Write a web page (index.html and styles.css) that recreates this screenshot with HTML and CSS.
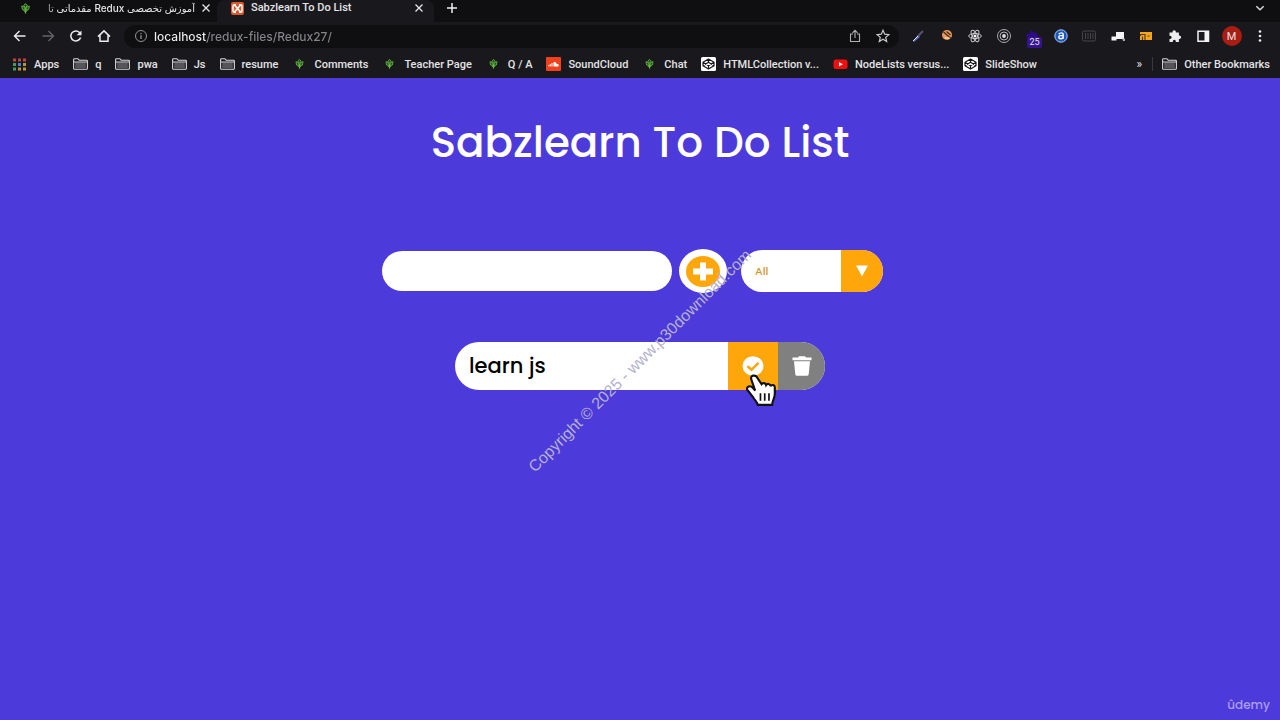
FILE: index.html
```
<!DOCTYPE html>
<html lang="en">
<head>
<meta charset="UTF-8" />
<meta name="viewport" content="width=device-width, initial-scale=1" />
<title>Sabzlearn To Do List</title>
<link rel="stylesheet" href="styles.css">
</head>
<body>
  <!-- shared icons -->
  <svg class="sprite" aria-hidden="true">
    <symbol id="leaf" viewBox="0 0 15 15">
      <path d="M7.500 2.600 9.400 4.500 7.500 6.500 5.600 4.500zM3.700 5l2.800 1.200.8 3L4.400 8.600zM11.300 5 8.500 6.200l-.8 3 2.900-.6zM5.500 9.500l2 1.500 2-1.500" fill="#1f4d1c" stroke="#66b843" stroke-width=".9"/>
      <path d="M7.500 7v5.500" stroke="#66b843" stroke-width="1.200"/>
    </symbol>
    <symbol id="folder" viewBox="0 0 15 12">
      <path d="M.6 10.400V1.600q0-.9.900-.9h3.300l1.400 1.500h7.300q.9 0 .9.900v7.300q0 .9-.9.900h-12q-.9 0-.9-.9z" fill="none" stroke="#d6d6d8" stroke-width="1.100"/>
      <path d="M2.200 4.500h10.600v5.500H2.200z" fill="#55555a"/>
      <path d="M1 4h13" stroke="#d6d6d8"/>
    </symbol>
    <symbol id="codepen" viewBox="0 0 15 14">
      <rect width="15" height="14" rx="1.500" fill="#fff"/>
      <path d="M7.500 2 13 5.300v3.400L7.500 12 2 8.700V5.300zM2 5.300l5.500 3.400L13 5.300M2 8.700l5.500-3.400L13 8.700M7.500 2v3.300M7.500 8.700V12" fill="none" stroke="#17171b" stroke-width="1.200" stroke-linejoin="round"/>
    </symbol>
    <symbol id="close" viewBox="0 0 10 10">
      <path d="m1.500 1.500 7 7m0-7-7 7" fill="none" stroke="#e6e6e8" stroke-width="1.300"/>
    </symbol>
  </svg>

  <header class="browser">
    <div class="tabs">
      <div class="tab">
        <svg class="favicon"><use href="#leaf"/></svg>
        <span class="tab-title tab-title-rtl" dir="rtl" lang="fa">آموزش تخصصی Redux مقدماتی تا</span>
        <button class="close" aria-label="Close tab"><svg><use href="#close"/></svg></button>
      </div>
      <div class="tab tab-active">
        <svg class="favicon" viewBox="0 0 15 15">
          <rect x="1" y="1" width="13" height="13" rx="2" fill="#e0562b"/>
          <path d="M4.500 4 10.500 11M10.500 4l-6 7" stroke="#fff" stroke-width="1.600"/>
          <path d="M6 3.800H4.300q-1.300 0-1.300 1.500v4.400q0 1.500 1.300 1.500H6M9 3.800h1.700q1.300 0 1.300 1.500v4.400q0 1.500-1.300 1.500H9" fill="none" stroke="#fff" stroke-width="1.500"/>
        </svg>
        <span class="tab-title">Sabzlearn To Do List</span>
        <button class="close" aria-label="Close tab"><svg><use href="#close"/></svg></button>
      </div>
      <button class="tool" aria-label="New tab"><svg viewBox="0 0 16 16"><path d="M8 3v10M3 8h10" stroke="#f0f0f2" stroke-width="1.500"/></svg></button>
      <button class="tool tab-search" aria-label="Search tabs"><svg viewBox="0 0 16 16"><path d="m4.300 6.200 3.700 3.600 3.700-3.600" fill="none" stroke="#d8d8da" stroke-width="1.500"/></svg></button>
    </div>

    <div class="toolbar">
      <button class="tool" aria-label="Back"><svg viewBox="0 0 16 16"><path d="M13.500 8H3M7.500 3 2.500 8l5 5" fill="none" stroke="#ececee" stroke-width="1.400"/></svg></button>
      <button class="tool" aria-label="Forward"><svg viewBox="0 0 16 16"><path d="M2.500 8H13M8.500 3l5 5-5 5" fill="none" stroke="#636367" stroke-width="1.400"/></svg></button>
      <button class="tool" aria-label="Reload"><svg viewBox="0 0 16 16"><path d="M12.600 9.500A5 5 0 1 1 11.500 4.500L12.800 6" fill="none" stroke="#ececee" stroke-width="1.500"/><path d="M13.500 2.500v4.800H8.700z" fill="#ececee"/></svg></button>
      <button class="tool" aria-label="Home"><svg viewBox="0 0 16 16"><path d="M2 8.600 8 2.900l6 5.700M4 7.500v5.700h8V7.500" fill="none" stroke="#ececee" stroke-width="1.500"/></svg></button>
      <div class="address">
        <svg class="info" viewBox="0 0 14 14"><circle cx="7" cy="7" r="5.500" fill="none" stroke="#929296"/><path d="M7 6.200V10M7 4v1.200" stroke="#929296" stroke-width="1.300"/></svg>
        <input class="url" type="text" value="localhost/redux-files/Redux27/" aria-label="Address" />
        <button class="tool" aria-label="Share"><svg viewBox="0 0 16 16"><path d="M6 6H3.500v7.500h9V6H10M8 10V2.500M5.500 4.800 8 2.300l2.500 2.500" fill="none" stroke="#b0b0b4" stroke-width="1.100"/></svg></button>
        <button class="tool" aria-label="Bookmark this page"><svg viewBox="0 0 16 16"><path d="m8 2.300 1.700 3.900 4.200.4-3.200 2.800 1 4.100L8 11.300l-3.700 2.200 1-4.100-3.200-2.800 4.200-.4z" fill="none" stroke="#c8c8cc" stroke-width="1.200"/></svg></button>
      </div>
      <div class="extensions">
        <button class="ext" aria-label="Color picker"><svg viewBox="0 0 16 16"><path d="m3 13 5-6 2 2-6 5z" fill="#5b6fd0"/><path d="m8 8 5-5" stroke="#55557a" stroke-width="2"/><path d="m3 13 5-5" stroke="#e0e4ff"/></svg></button>
        <button class="ext" aria-label="Blocker"><svg viewBox="0 0 16 16"><circle cx="8" cy="7" r="5" fill="#e59a5c"/><path d="m4.500 4 7.500 6.500M7.500 3.500l4 3.500" stroke="#4b2b20" stroke-width="1.300"/><path d="M5.500 10h5" stroke="#f3d2b0" stroke-width="1.500"/></svg></button>
        <button class="ext" aria-label="React tools"><svg viewBox="0 0 16 16"><g fill="none" stroke="#c9c9cc"><ellipse cx="8" cy="8" rx="6.300" ry="2.500"/><ellipse cx="8" cy="8" rx="6.300" ry="2.500" transform="rotate(60 8 8)"/><ellipse cx="8" cy="8" rx="6.300" ry="2.500" transform="rotate(120 8 8)"/></g><circle cx="8" cy="8" r="1.500" fill="#fff"/></svg></button>
        <button class="ext" aria-label="Recorder"><svg viewBox="0 0 16 16"><circle cx="8" cy="8" r="6.500" fill="none" stroke="#a9a9ac"/><circle cx="8" cy="8" r="4" fill="none" stroke="#b9b9bc"/><circle cx="8" cy="8" r="1.900" fill="#dcdcde"/></svg></button>
        <button class="ext ext-counter" aria-label="Counter"><svg viewBox="0 0 16 16"><path d="m7 2 2 2 5 2-1 5H5L1 7l5-2z" fill="#2a0d86"/></svg><span class="badge">25</span></button>
        <button class="ext" aria-label="Font finder"><svg viewBox="0 0 16 16"><circle cx="8" cy="8" r="6.200" fill="#1d56c4" stroke="#a9c8f5"/><path d="M5.800 6.200q1-1.300 2.600-1.300 1.800 0 1.800 1.800v4M10 7.600H7.800q-2 0-2 1.600t1.700 1.600q1.600 0 2.600-1.300" fill="none" stroke="#fff" stroke-width="1.400"/></svg></button>
        <button class="ext" aria-label="Ruler"><svg viewBox="0 0 16 16"><rect x="1.500" y="3" width="13" height="10" rx="1.500" fill="none" stroke="#47474b"/><path d="M4.500 5v6M7 5v6M9.500 5v6M12 5v6" stroke="#47474b"/></svg></button>
        <button class="ext" aria-label="Screens"><svg viewBox="0 0 16 16"><path d="M6 4h8v7H6zM1.500 8.500h5v4h-5z" fill="#f3f3f5"/><path d="M12 10.500h3V13h-2z" fill="#a9a9ac"/></svg></button>
        <button class="ext" aria-label="Feed"><svg viewBox="0 0 16 16"><path d="M2 4h12v8H2z" fill="#f2a51e"/><path d="M2.500 8V6.500H7V12M4.500 12V8.500M9.500 8h2" fill="none" stroke="#593c0c" stroke-width="1.200"/></svg></button>
        <button class="ext" aria-label="Extensions"><svg viewBox="0 0 16 16"><path d="M2.500 4.500h3V4a1.700 1.700 0 0 1 3.400 0v.5h3v3h.5a1.700 1.700 0 0 1 0 3.400h-.5v3H8.800v-.7a1.500 1.500 0 0 0-3 0v.7H2.500v-3h.6a1.600 1.600 0 0 0 0-3.200h-.6z" fill="#ececee"/></svg></button>
        <button class="ext" aria-label="Side panel"><svg viewBox="0 0 16 16"><path d="M3 3.200h10.500v10H3z" fill="none" stroke="#f3f3f5" stroke-width="1.500"/><path d="M9.500 3h4v10h-4z" fill="#f3f3f5"/></svg></button>
        <button class="ext avatar" aria-label="Profile">M</button>
        <button class="ext" aria-label="Menu"><svg viewBox="0 0 16 16"><g fill="#ececee"><circle cx="8" cy="3.500" r="1.300"/><circle cx="8" cy="8" r="1.300"/><circle cx="8" cy="12.500" r="1.300"/></g></svg></button>
      </div>
    </div>

    <nav class="bookmarks" aria-label="Bookmarks">
      <a href="#" class="bookmark">
        <svg viewBox="0 0 15 14"><path d="M1 1.500h3v3H1zM6 1.500h3v3H6zM11 1.500h3v3h-3z" fill="#b5483f"/><path d="M1 6h3v3H1z" fill="#4b9a5b"/><path d="M6 6h3v3H6z" fill="#4c7fd0"/><path d="M11 6h3v3h-3zM11 10.500h3v3h-3zM6 10.500h3v3H6z" fill="#b8953d"/><path d="M1 10.500h3v3H1z" fill="#4b9a5b"/></svg>Apps</a>
      <a href="#" class="bookmark"><svg><use href="#folder"/></svg>q</a>
      <a href="#" class="bookmark"><svg><use href="#folder"/></svg>pwa</a>
      <a href="#" class="bookmark"><svg><use href="#folder"/></svg>Js</a>
      <a href="#" class="bookmark"><svg><use href="#folder"/></svg>resume</a>
      <a href="#" class="bookmark"><svg><use href="#leaf"/></svg>Comments</a>
      <a href="#" class="bookmark"><svg><use href="#leaf"/></svg>Teacher Page</a>
      <a href="#" class="bookmark"><svg><use href="#leaf"/></svg>Q / A</a>
      <a href="#" class="bookmark">
        <svg viewBox="0 0 15 14"><rect width="15" height="14" rx="1" fill="#f0401c"/><path d="M7.500 9.500V5.300q2.700-.9 3.300 1.600 2-.1 2 1.300 0 1.300-1.300 1.300zM5.500 6h1v3.500h-1zM3.800 7h1v2.500h-1zM2.300 8h1v1.300h-1z" fill="#fff"/></svg>SoundCloud</a>
      <a href="#" class="bookmark"><svg><use href="#leaf"/></svg>Chat</a>
      <a href="#" class="bookmark"><svg><use href="#codepen"/></svg>HTMLCollection v...</a>
      <a href="#" class="bookmark">
        <svg viewBox="0 0 15 14"><rect x=".5" y="2.500" width="14" height="9.500" rx="2.500" fill="#f00f0f"/><path d="m6 5.200 4 2-4 2z" fill="#fff"/></svg>NodeLists versus...</a>
      <a href="#" class="bookmark"><svg><use href="#codepen"/></svg>SlideShow</a>
      <button class="more" aria-label="More bookmarks">»</button>
      <a href="#" class="bookmark other"><svg><use href="#folder"/></svg>Other Bookmarks</a>
    </nav>
  </header>

  <main class="page">
    <h1>Sabzlearn To Do List</h1>

    <form class="todo-form">
      <input class="todo-input" type="text" aria-label="New to do" />
      <button class="todo-button" type="button" aria-label="Add to do">
        <svg viewBox="0 0 34 31"><ellipse cx="17" cy="15.500" rx="17" ry="15.500" fill="#ffa60a"/><path d="M14 6.500h6v6h7v6h-7v6h-6v-6H7v-6h7z" fill="#fff"/></svg>
      </button>
      <div class="select">
        <select class="filter-todo" aria-label="Filter to dos">
          <option>All</option>
          <option>Completed</option>
          <option>Incomplete</option>
        </select>
        <span class="select-arrow"><svg viewBox="0 0 12 12"><path d="M0 .5h12L6 11.500z" fill="#fff"/></svg></span>
      </div>
    </form>

    <ul class="todo-list">
      <li class="todo">
        <span class="todo-item">learn js</span>
        <button class="complete-btn" aria-label="Complete">
          <svg viewBox="0 0 22 20"><ellipse cx="11" cy="10" rx="10.500" ry="9.800" fill="#fff"/><path d="m5.500 10.200 4 3.600 7-7" fill="none" stroke="#ffa60a" stroke-width="2.600"/></svg>
          <svg class="pointer" viewBox="0 0 32 32"><path d="M8.500 2.500C6.300 3 6.500 5 7 6.500l3.500 10-2.500-2.700C6.500 12 4.500 12.300 3.300 13.500c-1 1.200-.3 2.500.7 3.500l5 6.500c2 3 3.500 4 4 6.500h13.500c0-4 2.500-6 2.500-10.500v-6c0-2.500-3-3-4-1 0-2.500-3.200-3-4.200-1.200-.6-2.200-3.300-2.300-4.300-.8L12.500 4.500c-.6-1.700-2-2.300-4-2z" fill="#fff" stroke="#111" stroke-width="2"/><path d="M15.500 19v7M19.500 19v7M23.500 19v7" stroke="#111" stroke-width="1.600"/></svg>
        </button>
        <button class="trash-btn" aria-label="Delete">
          <svg viewBox="0 0 22 20"><path d="M1.500 1.500h5.500L8 .2h6l1 1.300h5.500v2.700h-19zM3 5.300h16l-1.300 13q-.2 1.500-1.700 1.500H6q-1.500 0-1.700-1.500z" fill="#fff"/></svg>
        </button>
      </li>
    </ul>

    <p class="watermark">Copyright © 2025 - www.p30download.com</p>
    <span class="brand">ûdemy</span>
  </main>
</body>
</html>
```
FILE: styles.css
```
* {
  box-sizing: border-box;
}

body {
  margin: 0;
  min-height: 100vh;
  display: flex;
  flex-direction: column;
  font-family: Poppins, Inter, sans-serif;
  background: #4d3adb;
  color: white;
}

button {
  border: none;
  padding: 0;
  background: none;
  color: inherit;
  font-family: inherit;
  cursor: pointer;
}

.sprite {
  position: absolute;
  width: 0;
  height: 0;
}

/* Browser bars */
.browser {
  background: #19191d;
  font-family: Roboto, sans-serif;
  font-size: 11px;
  font-weight: 500;
  color: #e4e4e6;
}

.tabs {
  display: flex;
  height: 22px;
  background: #0f0f11;
}
.tab {
  display: flex;
  align-items: center;
  flex: 0 1 217px;
  min-width: 0;
  gap: 6px;
  padding: 0 6px 6px 18px;
}
.tab-active {
  padding-left: 13px;
  padding-right: 10px;
  background: #19191d;
  border-radius: 8px 8px 0 0;
}
.favicon {
  width: 15px;
  height: 15px;
  flex: none;
}
.tab-title {
  flex: 1;
  line-height: 16px;
  white-space: nowrap;
  overflow: hidden;
}
.tab-title-rtl {
  font-family: Inter, "DejaVu Sans", sans-serif;
  font-size: 10px;
  mask-image: linear-gradient(90deg, transparent, black 16px);
}
.close,
.close svg {
  display: block;
  width: 10px;
  height: 10px;
}
.tool {
  display: grid;
  place-items: center;
  flex: none;
  width: 28px;
}
.tool svg,
.ext svg {
  width: 16px;
  height: 16px;
}
.tabs .tool {
  height: 16px;
  margin-left: 4px;
}
.tabs .tab-search {
  margin: 0 6px 0 auto;
}

.toolbar {
  display: flex;
  align-items: center;
  height: 28px;
  padding: 0 10px 0 6px;
}
.address {
  display: flex;
  align-items: center;
  flex: 1;
  height: 23px;
  margin: 0 9px 0 6px;
  padding: 0 2px 0 10px;
  border-radius: 12px;
  background: #0f0f11;
}
.info {
  width: 14px;
  height: 14px;
  margin-right: 6px;
}
.url {
  flex: 1;
  min-width: 0;
  padding: 0;
  border: none;
  outline: none;
  font: 500 12px Inter, sans-serif;
  /* host is brighter than the path */
  background: linear-gradient(90deg, #f0f0f2 53px, #85858a 53px);
  background-clip: text;
  -webkit-text-fill-color: transparent;
}

.extensions {
  display: flex;
  align-items: center;
  justify-content: space-between;
  flex: 0 0 362px;
}
.ext {
  display: grid;
  place-items: center;
  width: 20px;
  height: 20px;
}
.ext-counter {
  position: relative;
}
.badge {
  position: absolute;
  left: 5px;
  top: 11px;
  width: 15px;
  border-radius: 2px;
  background: #35138f;
  font-size: 9px;
  line-height: 11px;
  text-align: center;
}
.avatar {
  border-radius: 50%;
  background: #a91d13;
  font-size: 11px;
}

.bookmarks {
  display: flex;
  align-items: center;
  gap: 14px;
  height: 28px;
  padding: 0 10px 0 12px;
}
.bookmark {
  display: flex;
  align-items: center;
  gap: 7px;
  color: inherit;
  text-decoration: none;
  white-space: nowrap;
}
.bookmark svg {
  width: 15px;
  height: 14px;
}
.more {
  margin-left: auto;
  font-size: 12px;
}
.other {
  margin-left: -4px;
  padding-left: 9px;
  border-left: 1px solid #3a3a3e;
}

/* To do page */
.page {
  position: relative;
  flex: 1;
  overflow: hidden;
}

h1 {
  margin: 33px 0 0;
  font-size: 42px;
  line-height: 64px;
  font-weight: 500;
  text-align: center;
}

.todo-form {
  display: flex;
  align-items: center;
  justify-content: center;
  margin-top: 74px;
}
.todo-input {
  width: 290px;
  height: 40px;
  padding: 0 16px;
  border: none;
  border-radius: 20px;
  background: white;
  font: 500 20px Poppins, Inter, sans-serif;
}
.todo-button {
  display: grid;
  place-items: center;
  width: 48px;
  height: 44px;
  margin-left: 7px;
  border-radius: 50%;
  background: white;
}
.todo-button svg {
  width: 34px;
  height: 31px;
}
.select {
  position: relative;
  width: 142px;
  height: 42px;
  margin: 0 15px 0 14px;
  border-radius: 21px;
  overflow: hidden;
}
.filter-todo {
  appearance: none;
  width: 100%;
  height: 100%;
  padding: 0 14px;
  border: none;
  background: white;
  color: #d9952b;
  font: 500 11px Poppins, Inter, sans-serif;
}
.select-arrow {
  position: absolute;
  top: 0;
  right: 0;
  bottom: 0;
  width: 42px;
  display: grid;
  place-items: center;
  background: #ffa60a;
  pointer-events: none;
}
.select-arrow svg {
  width: 12px;
  height: 12px;
}

.todo-list {
  display: flex;
  flex-direction: column;
  align-items: center;
  margin: 49px 0 0;
  padding: 0;
  list-style: none;
}
.todo {
  display: flex;
  width: 370px;
  height: 48px;
  border-radius: 24px;
  background: white;
  color: black;
}
.todo-item {
  flex: 1;
  padding-left: 14px;
  font-size: 21px;
  line-height: 48px;
  font-weight: 500;
}
.complete-btn,
.trash-btn {
  display: grid;
  place-items: center;
  width: 50px;
  background: #ffa60a;
}
.complete-btn {
  position: relative;
}
.trash-btn {
  width: 47px;
  background: #808080;
  border-radius: 0 24px 24px 0;
}
.complete-btn svg,
.trash-btn svg {
  width: 22px;
  height: 20px;
}
.complete-btn .pointer {
  position: absolute;
  left: 16px;
  top: 31px;
  width: 34px;
  height: 34px;
}

.watermark {
  position: absolute;
  left: 50%;
  top: 283px;
  margin: 0;
  transform: translate(-50%, -50%) rotate(-45deg);
  font-family: "Liberation Sans", sans-serif;
  font-size: 16px;
  line-height: 20px;
  color: #b4b2cc;
  white-space: nowrap;
  pointer-events: none;
}
.brand {
  position: absolute;
  right: 10px;
  bottom: 6px;
  font-size: 12px;
  line-height: 18px;
  font-weight: 500;
  color: #a99df0;
}
```
